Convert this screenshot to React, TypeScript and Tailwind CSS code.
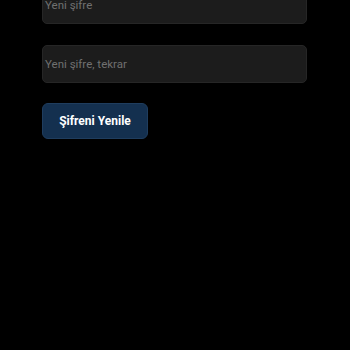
export default function App() {
  return (
    <div className="min-h-[350px] w-[350px] bg-black overflow-hidden" style={{ fontFamily: 'Roboto, "Noto Sans", sans-serif' }}>
      <div className="flex flex-col items-start px-[42px] -mt-[14px]">
        <div className="w-[265px] h-[38px] rounded-[5px] bg-[#1c1c1c] border border-[#262626] flex items-center pl-[2px] pt-[2px]">
          <span className="text-[11.5px] text-[#707070]">Yeni şifre</span>
        </div>
        <div className="mt-[21px] w-[265px] h-[38px] rounded-[5px] bg-[#1c1c1c] border border-[#262626] flex items-center pl-[2px] pt-[2px]">
          <span className="text-[11.5px] text-[#707070]">Yeni şifre, tekrar</span>
        </div>
        <button className="mt-[20px] h-[36px] w-[106px] rounded-[6px] bg-[#14304f] border border-[#1f3d5e] text-white text-[12px] font-bold flex items-center justify-center">
          Şifreni Yenile
        </button>
      </div>
    </div>
  );
}
